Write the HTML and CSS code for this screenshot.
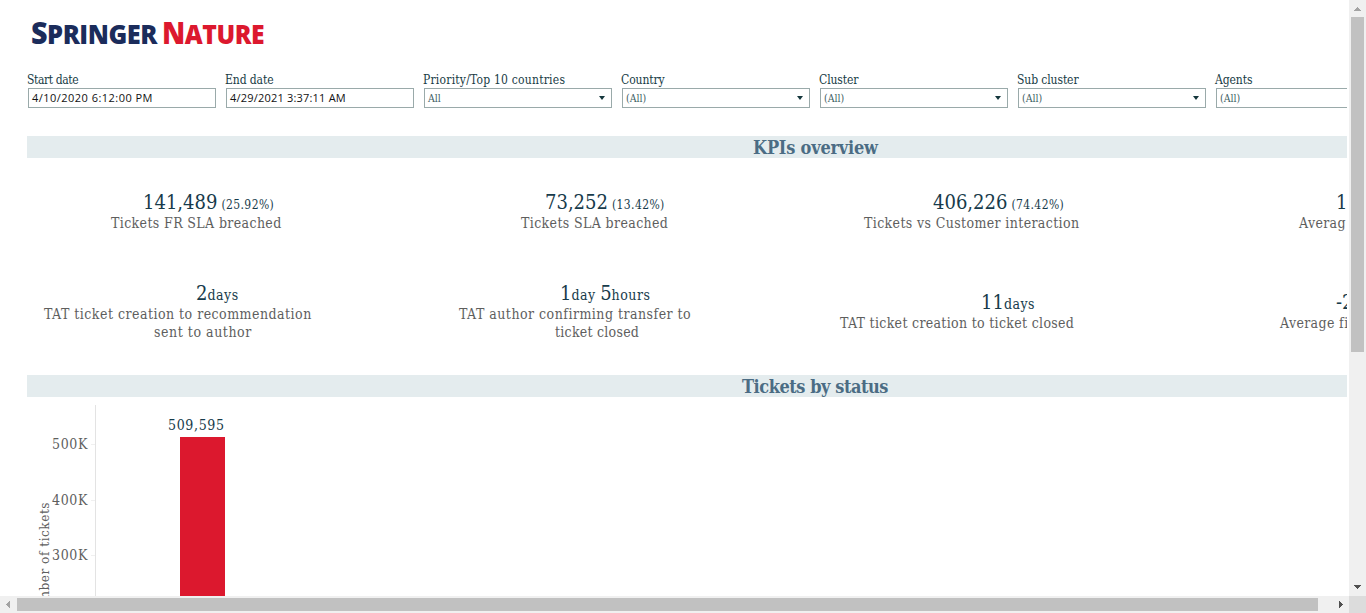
FILE: index.html
```
<!DOCTYPE html>
<html lang="en">
<head>
<meta charset="utf-8">
<title>Springer Nature tickets dashboard</title>
<link rel="stylesheet" href="styles.css">
</head>
<body>
<div class="window">
<main class="view">
  <header class="logo"><span class="navy"><b>S</b>PRINGER</span><span class="red"><b>N</b>ATURE</span></header>
  <section class="filters">
    <div class="filter tight"><label>Start date</label><div class="box date first">4/10/2020 6:12:00 PM</div></div>
    <div class="filter"><label>End date</label><div class="box date">4/29/2021 3:37:11 AM</div></div>
    <div class="filter loose"><label>Priority/Top 10 countries</label><div class="box select">All<i></i></div></div>
    <div class="filter"><label>Country</label><div class="box select">(All)<i></i></div></div>
    <div class="filter"><label>Cluster</label><div class="box select">(All)<i></i></div></div>
    <div class="filter"><label>Sub cluster</label><div class="box select">(All)<i></i></div></div>
    <div class="filter"><label>Agents</label><div class="box select">(All)<i></i></div></div>
  </section>
  <h2 class="band">KPIs overview</h2>
  <section class="kpis">
    <div class="kpi k1"><p class="value"><span>141,489</span> <small>(25.92%)</small></p><p>Tickets FR SLA breached</p></div>
    <div class="kpi k2"><p class="value"><span>73,252</span> <small>(13.42%)</small></p><p>Tickets SLA breached</p></div>
    <div class="kpi k3"><p class="value"><span>406,226</span> <small>(74.42%)</small></p><p>Tickets vs Customer interaction</p></div>
    <div class="kpi k4"><p class="value"><span>1</span></p><p>Averag</p></div>
    <div class="kpi k5"><p class="value"><span>2</span><em>days</em></p><p>TAT ticket creation to recommendation</p><p class="second">sent to author</p></div>
    <div class="kpi k6"><p class="value"><span>1</span><em>day </em><span>5</span><em>hours</em></p><p>TAT author confirming transfer to</p><p class="second">ticket closed</p></div>
    <div class="kpi k7"><p class="value"><span>11</span><em>days</em></p><p>TAT ticket creation to ticket closed</p></div>
    <div class="kpi k8"><p class="value"><span>-2</span></p><p>Average fi</p></div>
  </section>
  <h2 class="band status">Tickets by status</h2>
  <section class="chart">
    <div class="title"><span>Number of tickets</span></div>
    <div class="ticks"><span>500K</span><span>400K</span><span>300K</span></div>
    <div class="plot"><span class="num">509,595</span><div class="bar"></div></div>
  </section>
</main>
<div class="vscroll">
  <svg width="17" height="17" shape-rendering="crispEdges"><path d="M5 11h7L8.500 7z" fill="#a3a3a3"/></svg>
  <div class="vthumb"></div>
  <svg width="17" height="17" shape-rendering="crispEdges"><path d="M5 6h7L8.500 10z" fill="#505050"/></svg>
</div>
<div class="hscroll">
  <svg width="17" height="17" shape-rendering="crispEdges"><path d="M10 5v7L6 8.500z" fill="#a3a3a3"/></svg>
  <div class="hthumb"></div>
  <svg width="17" height="17" shape-rendering="crispEdges"><path d="M7 5v7L11 8.500z" fill="#505050"/></svg>
</div>
<div class="corner"></div>
</div>
</body>
</html>
```
FILE: styles.css
```
* { box-sizing: border-box; }
body { margin: 0; background: #fff; overflow: hidden; font-family: "DejaVu Serif Condensed", "DejaVu Serif", serif; }
.window { width: 1366px; height: 613px; display: grid; grid-template: 596px 17px / 1349px 17px; }
.view { width: 1347px; height: 596px; overflow: hidden; padding-left: 27px; }
.logo { height: 72px; padding: 14px 0 0 4px; display: flex; font: 800 27px/36px "Open Sans", sans-serif; letter-spacing: -0.5px; }
.logo b { font-size: 30.500px; font-weight: 800; }
.logo span { width: 131px; transform: scaleX(0.94); transform-origin: 0 0; white-space: nowrap; }
.logo .red { transform: scaleX(0.915); }
.navy { color: #1b2c5b; }
.red { color: #dc182e; }
.filters { display: flex; width: 1400px; height: 64px; }
.filter { width: 198px; flex: none; }
.filter label { display: block; height: 16px; line-height: 16px; font-size: 12px; letter-spacing: -0.1px; color: #173b45; white-space: nowrap; }
.tight label { letter-spacing: -0.4px; }
.loose label { letter-spacing: 0.22px; }
.box { width: 188px; height: 20px; margin-left: 1px; border: 1px solid #9aaaaa; display: flex; align-items: center; justify-content: space-between; padding: 0 6px 0 3px; font-size: 10.500px; color: #405e63; }
.date { font: 11px "Open Sans", sans-serif; letter-spacing: 0.2px; color: #111; white-space: nowrap; padding: 0 3px 1px; }
.date.first { letter-spacing: 0.47px; }
.box i { border: 3.500px solid transparent; border-top: 4px solid #14363c; border-bottom: 0; }
.band { width: 1577px; height: 22px; margin: 0; background: #e4ecee; color: #4b6c84; font-size: 18px; line-height: 23px; padding-left: 726px; letter-spacing: -0.2px; }
.kpis { height: 217px; display: grid; grid-template: 100px 117px / 394px 394px 394px 394px; padding-top: 34px; }
.kpi p { margin: 0; height: 18px; line-height: 20px; font-size: 14px; letter-spacing: 0.37px; color: #5e5e5e; white-space: nowrap; }
.kpi .value { display: flex; align-items: baseline; height: 21px; line-height: 21px; color: #173b4b; }
.value span { font-size: 20px; line-height: 21px; letter-spacing: 0; }
.value small { font-size: 12px; letter-spacing: 0.4px; margin-left: 4px; }
.value em { font-style: normal; font-size: 14px; letter-spacing: 0.5px; white-space: pre; }
.k1 { padding-left: 84px; } .k1 .value { padding-left: 32px; }
.k2 { padding-left: 100px; } .k2 .value { padding-left: 24px; }
.k3 { padding-left: 49px; } .k3 .value { padding-left: 69px; }
.k4 { padding-left: 90px; } .k4 .value { padding-left: 37px; }
.k5 { padding-left: 17px; } .k5 .value { padding-left: 152px; } .k5 .second { padding-left: 110px; }
.k6 { padding-left: 38px; } .k6 .value { padding-left: 101px; } .k6 .second { padding-left: 96px; }
.k7 { padding-left: 25px; } .k7 .value { padding-left: 141px; }
.k8 { padding-left: 71px; } .k8 .value { padding-left: 56px; }
.k5, .k6 { margin-top: -9px; }
.k5 p, .k6 p { letter-spacing: 0.48px; }
.k5 .second { letter-spacing: 0.55px; }
.k6 .second { letter-spacing: 0.25px; }
.k7 p { letter-spacing: 0.31px; }
.status { padding-left: 715px; letter-spacing: -0.45px; }
.chart { height: 300px; display: grid; grid-template-columns: 25px 43px 1fr; font-size: 14px; letter-spacing: 0.65px; color: #5e5e5e; }
.title { padding: 105px 0 0 8px; }
.title span { display: block; writing-mode: vertical-rl; transform: rotate(180deg); font-size: 13.500px; letter-spacing: 0.5px; line-height: 18px; white-space: nowrap; }
.ticks { padding-top: 38px; display: grid; grid-auto-rows: 55.500px; line-height: 18px; }
.ticks span { background: linear-gradient(#f0f0f0, #f0f0f0) 39px 9px / 4px 1px no-repeat; }
.plot { margin-top: 8px; border-left: 1px solid #e3e3e3; padding: 11px 0 0 72px; color: #173b4b; }
.num { display: block; height: 21px; line-height: 18px; }
.bar { width: 45px; height: 280px; margin-left: 12px; background: #dc182e; }
.vscroll { display: flex; flex-direction: column; background: #f0f0f0; }
.vthumb { width: 13px; height: 335px; margin: 0 2px 218px; background: #c1c1c1; }
.vscroll svg, .hscroll svg { flex: none; }
.vthumb + svg { margin-top: 9px; }
.hscroll { display: flex; background: #f0f0f0; }
.hthumb { width: 1301px; height: 13px; margin: 2px 14px 0 0; background: #c1c1c1; }
.corner { background: #dcdcdc; }
```
